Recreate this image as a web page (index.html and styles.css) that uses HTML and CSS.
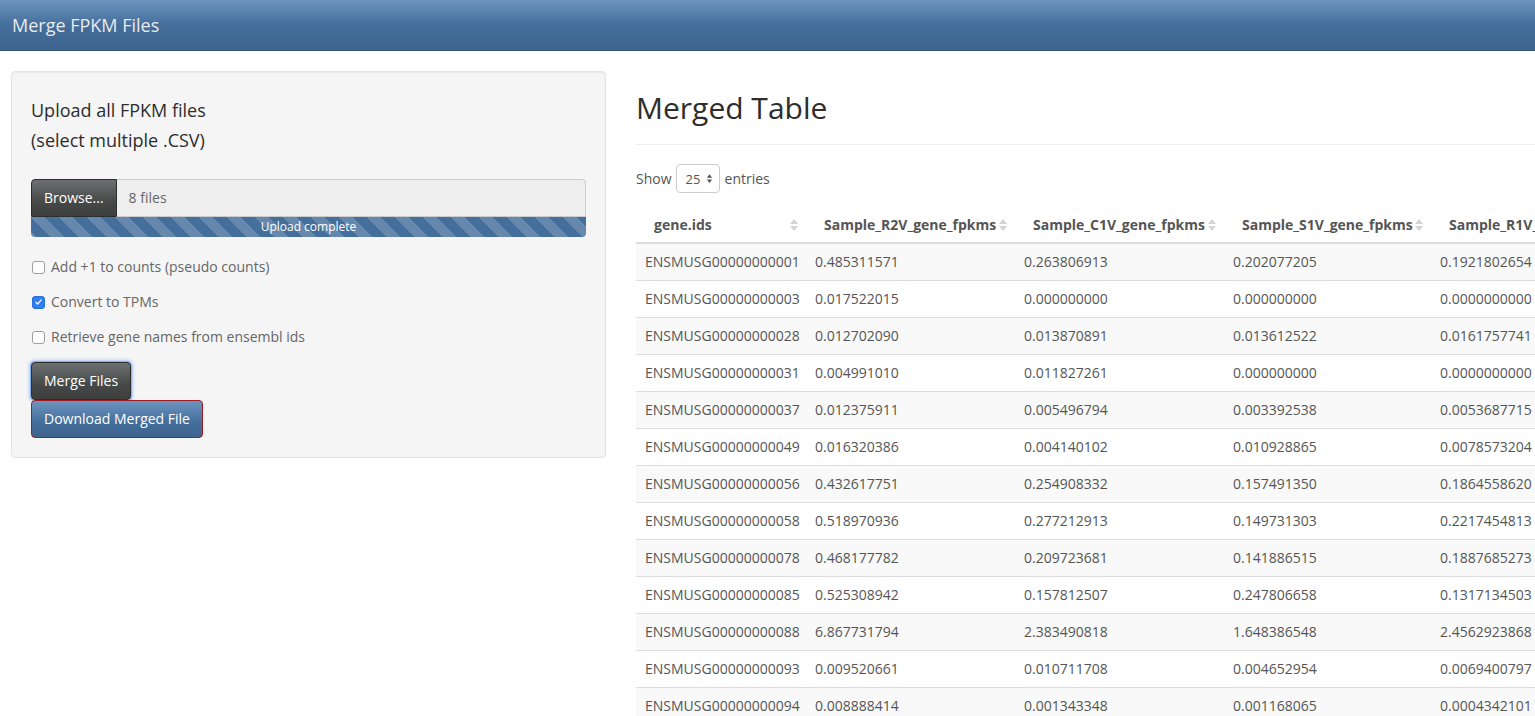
FILE: index.html
```html
<!DOCTYPE html>
<html lang="en">
<head>
<meta charset="utf-8">
<title>Merge FPKM Files</title>
<link rel="stylesheet" href="styles.css">
</head>
<body>
<nav class="navbar"><span class="brand">Merge FPKM Files</span></nav>
<div class="page">
  <aside class="sidebar">
    <div class="well">
      <div class="upload-label">Upload all FPKM files<br>(select multiple .CSV)</div>
      <div class="input-group">
        <span class="btn btn-default browse">Browse...</span>
        <span class="file-name">8 files</span>
      </div>
      <div class="progress"><span>Upload complete</span></div>
      <div class="checks">
        <label class="check"><span class="box"></span>Add +1 to counts (pseudo counts)</label>
        <label class="check"><span class="box checked"><svg viewBox="0 0 14 14" width="14" height="14"><path d="M3.8 7.4 L6 9.6 L10.3 4.4" fill="none" stroke="#fff" stroke-width="1.6" stroke-linecap="round" stroke-linejoin="round"/></svg></span>Convert to TPMs</label>
        <label class="check"><span class="box"></span>Retrieve gene names from ensembl ids</label>
      </div>
      <div class="buttons">
        <button class="btn btn-default merge">Merge Files</button>
        <button class="btn btn-primary download">Download Merged File</button>
      </div>
    </div>
  </aside>
  <main class="main">
    <h2 class="title">Merged Table</h2>
    <hr class="rule">
    <div class="length">Show <span class="select">25<svg viewBox="0 0 8 12" width="7" height="11"><path d="M4 1 L7 5 L1 5Z M4 11 L7 7 L1 7Z" fill="#555"/></svg></span> entries</div>
    <div class="table-wrap">
      <table class="data">
        <colgroup>
          <col class="c1"><col class="c2"><col class="c3"><col class="c4"><col class="c5"><col class="c6">
        </colgroup>
        <thead>
          <tr>
            <th>gene.ids<i class="sort"></i></th>
            <th>Sample_R2V_gene_fpkms<i class="sort"></i></th>
            <th>Sample_C1V_gene_fpkms<i class="sort"></i></th>
            <th>Sample_S1V_gene_fpkms<i class="sort"></i></th>
            <th>Sample_R1V_gene_fpkms<i class="sort"></i></th>
            <th>Sample_S2V_gene_fpkms<i class="sort"></i></th>
          </tr>
        </thead>
        <tbody>
          <tr><td>ENSMUSG00000000001</td><td>0.485311571</td><td>0.263806913</td><td>0.202077205</td><td>0.1921802654</td><td>0.2277160000</td></tr>
          <tr><td>ENSMUSG00000000003</td><td>0.017522015</td><td>0.000000000</td><td>0.000000000</td><td>0.0000000000</td><td>0.0000000000</td></tr>
          <tr><td>ENSMUSG00000000028</td><td>0.012702090</td><td>0.013870891</td><td>0.013612522</td><td>0.0161757741</td><td>0.0141900000</td></tr>
          <tr><td>ENSMUSG00000000031</td><td>0.004991010</td><td>0.011827261</td><td>0.000000000</td><td>0.0000000000</td><td>0.0000000000</td></tr>
          <tr><td>ENSMUSG00000000037</td><td>0.012375911</td><td>0.005496794</td><td>0.003392538</td><td>0.0053687715</td><td>0.0042200000</td></tr>
          <tr><td>ENSMUSG00000000049</td><td>0.016320386</td><td>0.004140102</td><td>0.010928865</td><td>0.0078573204</td><td>0.0091200000</td></tr>
          <tr><td>ENSMUSG00000000056</td><td>0.432617751</td><td>0.254908332</td><td>0.157491350</td><td>0.1864558620</td><td>0.2012000000</td></tr>
          <tr><td>ENSMUSG00000000058</td><td>0.518970936</td><td>0.277212913</td><td>0.149731303</td><td>0.2217454813</td><td>0.2310000000</td></tr>
          <tr><td>ENSMUSG00000000078</td><td>0.468177782</td><td>0.209723681</td><td>0.141886515</td><td>0.1887685273</td><td>0.1920000000</td></tr>
          <tr><td>ENSMUSG00000000085</td><td>0.525308942</td><td>0.157812507</td><td>0.247806658</td><td>0.1317134503</td><td>0.1450000000</td></tr>
          <tr><td>ENSMUSG00000000088</td><td>6.867731794</td><td>2.383490818</td><td>1.648386548</td><td>2.4562923868</td><td>2.1100000000</td></tr>
          <tr><td>ENSMUSG00000000093</td><td>0.009520661</td><td>0.010711708</td><td>0.004652954</td><td>0.0069400797</td><td>0.0070000000</td></tr>
          <tr><td>ENSMUSG00000000094</td><td>0.008888414</td><td>0.001343348</td><td>0.001168065</td><td>0.0004342101</td><td>0.0010000000</td></tr>
        </tbody>
      </table>
    </div>
  </main>
</div>
</body>
</html>
```
FILE: styles.css
```css
html, body {
  margin: 0;
  padding: 0;
  overflow: hidden;
  background: #fff;
}
body {
  font-family: "Open Sans", "Liberation Sans", sans-serif;
  font-size: 14px;
  line-height: 20px;
  color: #666;
  width: 1535px;
  height: 716px;
}
.navbar {
  height: 50px;
  border-bottom: 1px solid #345578;
  background-image: linear-gradient(#6d94bf, #446e9b 50%, #3e648d);
  display: flex;
  align-items: center;
  padding-left: 12px;
}
.brand {
  font-size: 18px;
  color: #eaeaea;
  line-height: 20px;
  margin-top: -1px;
}
.page {
  display: flex;
  align-items: flex-start;
  margin-top: 20px;
}
.sidebar {
  flex: 0 0 595px;
  margin-left: 11px;
}
.well {
  background: #f5f5f5;
  border: 1px solid #e3e3e3;
  border-radius: 4px;
  padding: 19px;
  box-shadow: inset 0 1px 1px rgba(0,0,0,0.05);
}
.upload-label {
  font-size: 18px;
  line-height: 30px;
  color: #2d2d2d;
  padding-top: 4px;
  margin-bottom: 24px;
}
.input-group {
  display: flex;
  height: 38px;
}
.btn {
  font-family: "Open Sans", "Liberation Sans", sans-serif;
  font-size: 14px;
  line-height: 20px;
  padding: 8px 12px;
  border-radius: 4px;
  color: #fff;
  display: inline-block;
  box-sizing: border-box;
  cursor: pointer;
  white-space: nowrap;
}
.btn-default {
  background-image: linear-gradient(#6d7070, #474949 60%, #3d3f3f);
  border: 1px solid #2c2d2d;
}
.btn-primary {
  background-image: linear-gradient(#6d94bf, #446e9b 60%, #3e648d);
  border: 1px solid #a01a20;
}
.browse {
  height: 38px;
  border-radius: 4px 0 0 0;
}
.file-name {
  flex: 1;
  background: #eee;
  border: 1px solid #ccc;
  border-left: none;
  border-radius: 0 4px 0 0;
  padding: 8px 12px;
  color: #666;
  box-sizing: border-box;
}
.progress {
  height: 20px;
  border-radius: 0 0 4px 4px;
  background-color: #446e9b;
  background-image: linear-gradient(45deg, rgba(255,255,255,0.18) 25%, transparent 25%, transparent 50%, rgba(255,255,255,0.18) 50%, rgba(255,255,255,0.18) 75%, transparent 75%, transparent);
  background-size: 28px 28px;
  text-align: center;
  font-size: 12px;
  line-height: 20px;
  color: #fff;
}
.checks {
  display: flex;
  flex-direction: column;
  gap: 15px;
  margin-top: 20px;
}
.check {
  display: flex;
  align-items: center;
  height: 20px;
  color: #666;
}
.box {
  width: 13px;
  height: 13px;
  box-sizing: border-box;
  border: 1px solid #a0a0a0;
  border-radius: 3px;
  background: #fff;
  margin-left: 1px;
  margin-right: 6px;
  display: flex;
  align-items: center;
  justify-content: center;
}
.box.checked {
  background: #2f7ff0;
  border-color: #2a6fd6;
}
.box svg {
  width: 12px;
  height: 12px;
}
.buttons {
  display: flex;
  flex-direction: column;
  align-items: flex-start;
  margin-top: 15px;
}
.merge {
  height: 38px;
  box-shadow: 0 0 0 1px #8ab4ef, 0 0 3px 2px rgba(110,160,240,0.55);
}
.download {
  height: 38px;
}
.main {
  margin-left: 30px;
  flex: 1;
  min-width: 0;
  overflow: hidden;
}
.title {
  font-size: 30px;
  font-weight: 400;
  line-height: 33px;
  color: #2d2d2d;
  margin: 20px 0 20px;
}
.rule {
  border: 0;
  border-top: 1px solid #eee;
  margin: 0 0 19px;
}
.length {
  display: flex;
  align-items: center;
  height: 29px;
  color: #555;
}
.select {
  display: inline-flex;
  align-items: center;
  justify-content: space-between;
  width: 44px;
  height: 29px;
  box-sizing: border-box;
  border: 1px solid #ccc;
  border-radius: 4px;
  padding: 0 6px 0 9px;
  margin: 0 5px 0 4px;
  font-size: 13px;
  color: #555;
  background: #fff;
}
.table-wrap {
  margin-top: 9px;
}
.data {
  border-collapse: collapse;
  table-layout: fixed;
  width: 1225px;
}
.c1 { width: 170px; }
.c2 { width: 209px; }
.c3 { width: 209px; }
.c4 { width: 207px; }
.c5 { width: 215px; }
.c6 { width: 215px; }
.data th {
  position: relative;
  text-align: left;
  font-weight: 700;
  color: #555;
  padding: 13px 18px 7px;
  border-bottom: 2px solid #ddd;
  white-space: nowrap;
  overflow: hidden;
}
.data td {
  padding: 8px 9px;
  border-top: 1px solid #ddd;
  color: #555;
  white-space: nowrap;
  overflow: hidden;
}
.data tbody tr:nth-child(odd) td {
  background: #f9f9f9;
}
.data tbody tr:first-child td {
  border-top: none;
}
.sort {
  position: absolute;
  right: 8px;
  top: 16px;
  width: 8px;
  height: 14px;
}
.sort::before, .sort::after {
  content: "";
  position: absolute;
  left: 0;
  border-left: 4px solid transparent;
  border-right: 4px solid transparent;
}
.sort::before {
  top: 1px;
  border-bottom: 5px solid #d4d4d4;
}
.sort::after {
  bottom: 1px;
  border-top: 5px solid #d4d4d4;
}
```
